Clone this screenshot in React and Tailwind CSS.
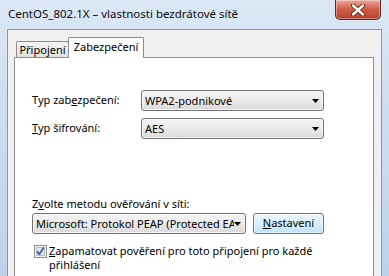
import React from "react";

function CloseButton() {
    return (
        <div className="mr-[8px] w-[46px] h-[20px] rounded-b-[5px] border border-t-0 border-[#5e2a22] bg-gradient-to-b from-[#e9a99b] via-[#cf5a45] to-[#b8432f] flex items-center justify-center shadow-[inset_0_0_0_1px_rgba(255,255,255,0.35)]">
            <svg width="16" height="12" viewBox="0 0 16 12">
                <path d="M3 1.5 L13 10.5 M13 1.5 L3 10.5" stroke="#5a1f16" strokeWidth="4.2" strokeLinecap="round" />
                <path d="M3 1.5 L13 10.5 M13 1.5 L3 10.5" stroke="#ffffff" strokeWidth="2.4" strokeLinecap="round" />
            </svg>
        </div>
    );
}

function Arrow() {
    return (
        <svg width="7" height="4" viewBox="0 0 7 4" className="shrink-0">
            <path d="M0 0 H7 L3.5 4 Z" fill="#000" />
        </svg>
    );
}

function Combo({ text, className }) {
    return (
        <div className={`h-[21px] flex items-center pl-[3px] pr-[4px] border border-[#707070] rounded-[3px] bg-gradient-to-b from-[#f4f4f4] via-[#ebebeb] to-[#d9d9d9] shadow-[inset_0_0_0_1px_rgba(255,255,255,0.7)] ${className}`}>
            <span className="flex-1 min-w-0 overflow-hidden whitespace-nowrap leading-[19px]">{text}</span>
            <Arrow />
        </div>
    );
}

function Checkbox() {
    return (
        <svg width="13" height="13" viewBox="0 0 13 13" className="shrink-0">
            <rect x="0.5" y="0.5" width="12" height="12" fill="#f4f4f4" stroke="#8e8f8f" />
            <rect x="2.5" y="2.5" width="8" height="8" fill="#e4e8ee" stroke="#b5bcc7" />
            <path d="M3.2 6.4 L5.3 9.2 L9.8 2.6" fill="none" stroke="#3a5fa8" strokeWidth="1.8" strokeLinejoin="round" />
        </svg>
    );
}

export default function App() {
    return (
        <div className="w-[389px] h-[276px] overflow-hidden flex flex-col bg-gradient-to-b from-[#dbe7f4] via-[#cadcef] to-[#bdd3eb] text-[11px] text-black font-['Noto_Sans',sans-serif]">
            {/* TITLE BAR */}
            <div className="h-[29px] shrink-0 flex">
                <div className="flex-1 pl-[8px] pt-[5px] leading-[17px] text-[11.5px] text-[#0b0b0b]">
                    CentOS_802.1X – vlastnosti bezdrátové sítě
                </div>
                <CloseButton />
            </div>

            {/* CLIENT */}
            <div className="mx-[7px] flex-1 flex flex-col border-x border-t border-[#8597ad] bg-[#f0f0f0] pl-[6px] pr-[7px]">
                {/* TABS */}
                <div className="mt-[7px] flex items-end pl-[2px] h-[20px]">
                    <div className="w-[53px] h-[16px] border border-b-0 border-[#898c95] rounded-t-[2px] bg-gradient-to-b from-[#f5f5f5] to-[#e1e1e1] text-center leading-[16px]">
                        Připojení
                    </div>
                    <div className="relative z-10 -ml-px -mb-px w-[76px] h-[21px] border border-b-0 border-[#898c95] rounded-t-[2px] bg-white text-center leading-[17px]">
                        Zabezpečení
                    </div>
                </div>

                {/* PANEL */}
                <div className="flex-1 border border-b-0 border-[#898c95] bg-white pl-[17px] pt-[32px]">
                    <div className="flex items-center h-[21px]">
                        <span className="w-[109px]">Typ zab<u>e</u>zpečení:</span>
                        <Combo text="WPA2-podnikové" className="w-[183px]" />
                    </div>
                    <div className="flex items-center h-[21px] mt-[7px]">
                        <span className="w-[109px]"><u>T</u>yp šifrování:</span>
                        <Combo text="AES" className="w-[183px]" />
                    </div>

                    <div className="mt-[57px] leading-[16px]">
                        Z<u>v</u>olte metodu ověřování v síti:
                    </div>
                    <div className="flex items-center mt-[1px]">
                        <Combo text="Microsoft: Protokol PEAP (Protected EAP)" className="w-[214px]" />
                        <div className="ml-[7px] w-[71px] h-[21px] border border-[#3c7fb1] rounded-[3px] bg-gradient-to-b from-[#ebf6fd] via-[#d9eefb] to-[#bee3f8] shadow-[inset_0_0_0_1px_rgba(255,255,255,0.6)] flex items-center justify-center">
                            <span><u>N</u>astavení</span>
                        </div>
                    </div>

                    <div className="flex items-start mt-[11px] pl-[2px]">
                        <Checkbox />
                        <div className="ml-[2px] leading-[14px] -mt-[1px]">
                            <u>Z</u>apamatovat pověření pro toto připojení pro každé
                            <br />
                            přihlášení
                        </div>
                    </div>
                </div>
            </div>
        </div>
    );
}
